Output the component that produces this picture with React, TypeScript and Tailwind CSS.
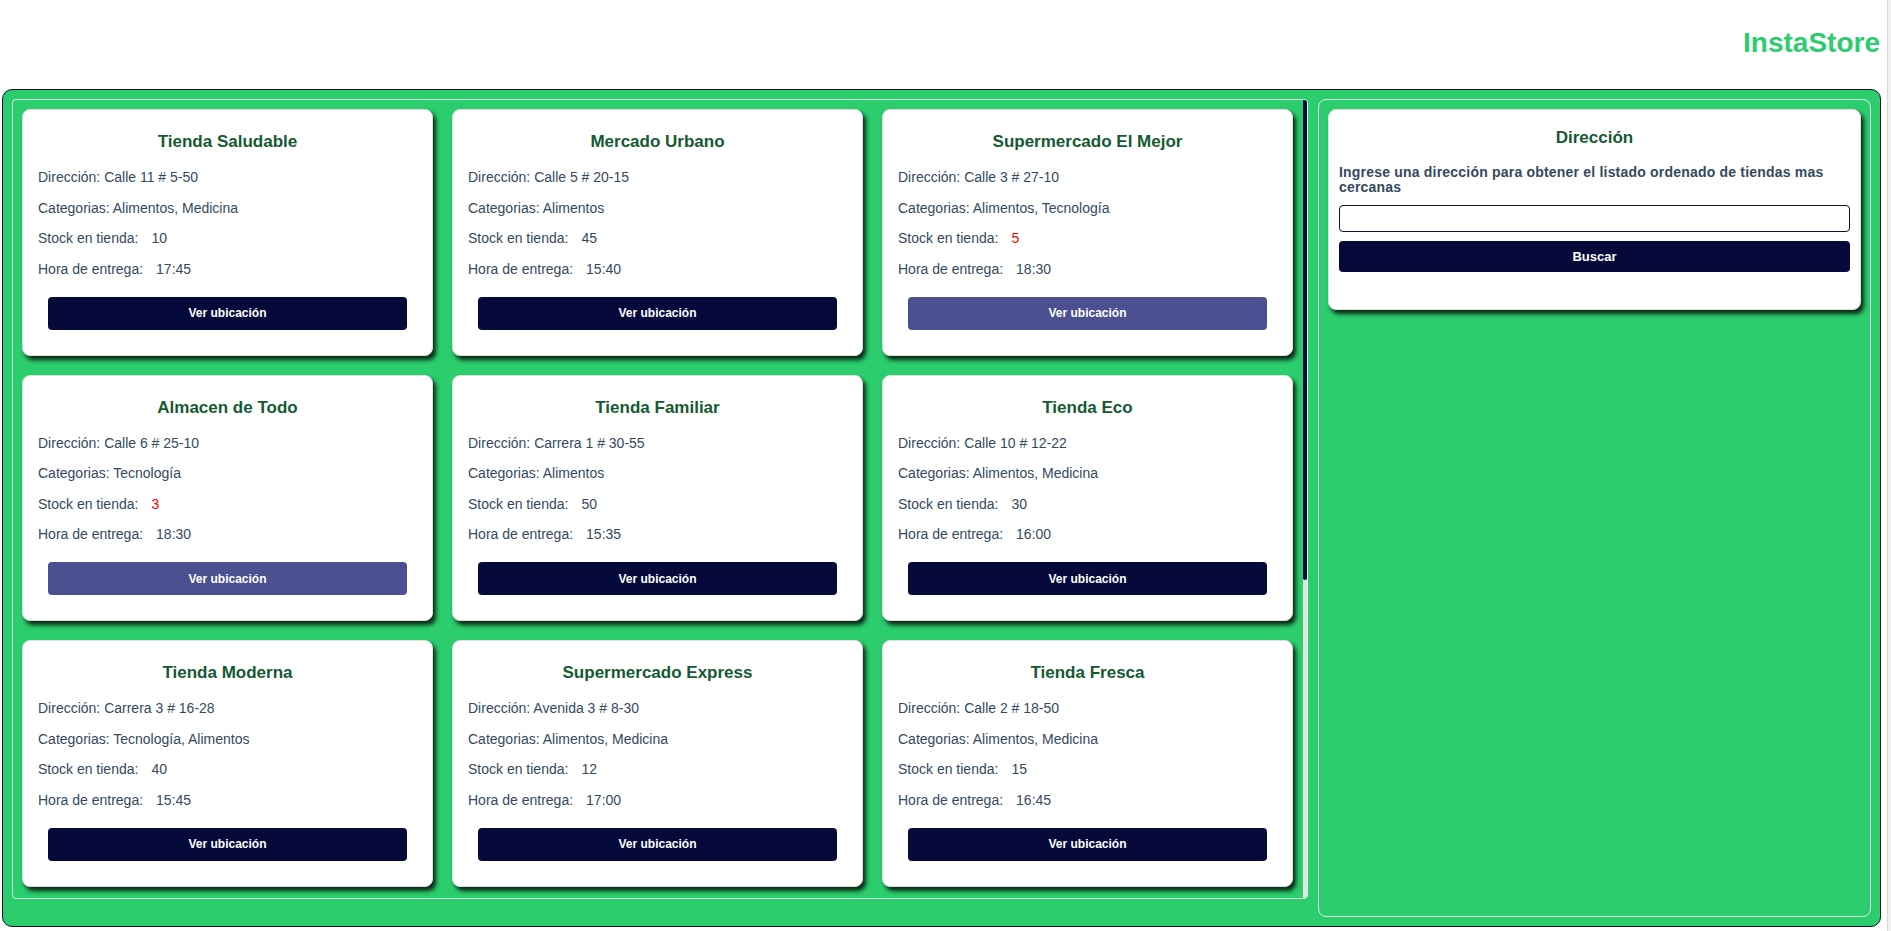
const STORES = [
  { name: "Tienda Saludable", address: "Calle 11 # 5-50", categories: "Alimentos, Medicina", stock: 10, time: "17:45" },
  { name: "Mercado Urbano", address: "Calle 5 # 20-15", categories: "Alimentos", stock: 45, time: "15:40" },
  { name: "Supermercado El Mejor", address: "Calle 3 # 27-10", categories: "Alimentos, Tecnología", stock: 5, time: "18:30" },
  { name: "Almacen de Todo", address: "Calle 6 # 25-10", categories: "Tecnología", stock: 3, time: "18:30" },
  { name: "Tienda Familiar", address: "Carrera 1 # 30-55", categories: "Alimentos", stock: 50, time: "15:35" },
  { name: "Tienda Eco", address: "Calle 10 # 12-22", categories: "Alimentos, Medicina", stock: 30, time: "16:00" },
  { name: "Tienda Moderna", address: "Carrera 3 # 16-28", categories: "Tecnología, Alimentos", stock: 40, time: "15:45" },
  { name: "Supermercado Express", address: "Avenida 3 # 8-30", categories: "Alimentos, Medicina", stock: 12, time: "17:00" },
  { name: "Tienda Fresca", address: "Calle 2 # 18-50", categories: "Alimentos, Medicina", stock: 15, time: "16:45" }
];

function StoreCard({ store }: { store: (typeof STORES)[number] }) {
  const low = store.stock < 10;
  return (
    <div className="rounded-lg border border-[#dedede] bg-white px-[15px] pt-[22px] pb-[25px] shadow-[3px_4px_4px_rgba(0,0,0,0.8)]">
      <h3 className="text-center text-[17px] font-bold leading-[20px] text-[#145a32]">{store.name}</h3>
      <div className="mt-[17px] flex flex-col gap-[14.5px] text-[14px] leading-[16px] text-[#34495e]">
        <p>Dirección: {store.address}</p>
        <p>Categorias: {store.categories}</p>
        <p>
          Stock en tienda:
          <span className={`ml-[13px] ${low ? "text-[#ff0000]" : ""}`}>{store.stock}</span>
        </p>
        <p>
          Hora de entrega:
          <span className="ml-[13px]">{store.time}</span>
        </p>
      </div>
      <button
        className={`mx-auto mt-[20px] block h-[33px] w-[359px] rounded-[4px] text-[12px] font-bold text-white ${
          low ? "bg-[#4b5090]" : "bg-[#050a3b]"
        }`}
      >
        Ver ubicación
      </button>
    </div>
  );
}

export default function App() {
  return (
    <div className="flex bg-white font-['Liberation_Sans',Arial,sans-serif]">
      <div className="w-[1887px]">
        <header className="flex h-[89px] justify-end pr-[7px] pt-[27px]">
          <h1 className="text-[28px] font-bold leading-[32px] text-[#2ecc71]">InstaStore</h1>
        </header>

        <main className="ml-[2px] flex h-[838px] w-[1879px] items-start gap-[10px] rounded-[10px] border border-[#0b0f3a] bg-[#2bcd6c] p-[9px]">
          <section className="flex h-[800px] w-[1296px] overflow-hidden rounded-[4px] border border-white/80">
            <div className="grid flex-1 grid-cols-3 content-start gap-[19px] pt-[9px] pr-[10px] pb-[10px] pl-[9px]">
              {STORES.map((store) => (
                <StoreCard key={store.name} store={store} />
              ))}
            </div>
            {/* scrollbar of the list */}
            <div className="w-[4px] bg-[#e4e4e4]">
              <div className="h-[480px] rounded-b-[2px] bg-[#050a3b]" />
            </div>
          </section>

          <aside className="flex-1 self-stretch rounded-[8px] border border-white/80 p-[9px]">
            <div className="rounded-lg border border-[#dedede] bg-white px-[10px] pt-[18px] pb-[37px] shadow-[3px_4px_4px_rgba(0,0,0,0.8)]">
              <h3 className="text-center text-[17px] font-bold leading-[20px] text-[#145a32]">Dirección</h3>
              <p className="mt-[17px] text-[14px] font-bold leading-[15px] tracking-[0.2px] text-[#34495e]">
                Ingrese una dirección para obtener el listado ordenado de tiendas mas cercanas
              </p>
              <input
                type="text"
                className="mt-[10px] block h-[27px] w-full rounded-[4px] border border-[#0b0f3a] bg-white px-2 text-[14px] outline-none"
              />
              <button className="mt-[9px] block h-[31px] w-full rounded-[4px] bg-[#050a3b] text-[13px] font-bold text-white">
                Buscar
              </button>
            </div>
          </aside>
        </main>
      </div>
      <div className="h-screen w-[4px] border-l border-[#d6d6d6] bg-[#f1f1f1]" />
    </div>
  );
}
